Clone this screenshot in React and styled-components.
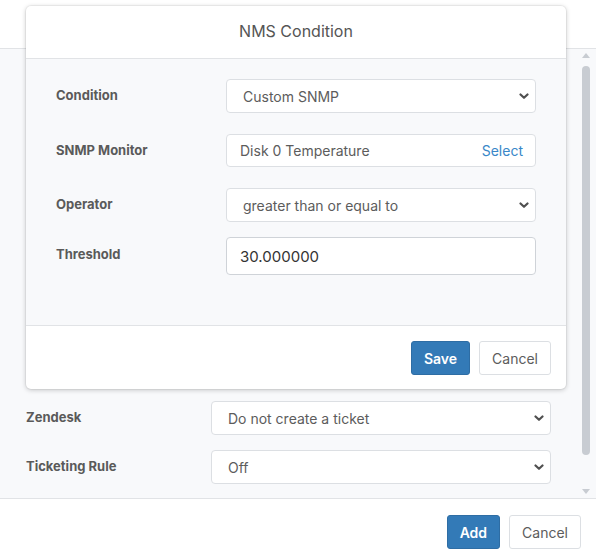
import React from 'react'
import styled, { createGlobalStyle } from 'styled-components'

const GlobalStyle = createGlobalStyle`
    * { box-sizing: border-box; }
    body {
        margin: 0;
        font-family: Inter, "Noto Sans", sans-serif;
        font-size: 14px;
        color: #5c5c5c;
        background: #fff;
    }
`

// small bold chevron used by the select boxes
const Chevron = () => (
    <svg width="10" height="7" viewBox="0 0 10 7">
        <path d="M1.5 1.5 L5 4.8 L8.5 1.5" fill="none" stroke="#4f4f4f" strokeWidth="2.2" strokeLinecap="round" strokeLinejoin="round" />
    </svg>
)

function SelectBox({ value }) {
    return (
        <Select role="listbox">
            <span>{value}</span>
            <Chevron />
        </Select>
    )
}

function App() {
    return (
        <>
            <GlobalStyle />
            <Page>
                <TopBar />
                <Body>
                    <Content>
                        <Row>
                            <Label>Zendesk</Label>
                            <SelectBox value="Do not create a ticket" />
                        </Row>
                        <Row>
                            <Label>Ticketing Rule</Label>
                            <SelectBox value="Off" />
                        </Row>
                    </Content>
                    <ScrollTrack>
                        <Arrow $up />
                        <Thumb />
                        <Arrow />
                    </ScrollTrack>
                </Body>
                <Footer>
                    <Button $primary>Add</Button>
                    <Button>Cancel</Button>
                </Footer>

                <Modal>
                    <ModalHeader>NMS Condition</ModalHeader>
                    <ModalBody>
                        <ModalRow>
                            <ModalLabel>Condition</ModalLabel>
                            <SelectBox value="Custom SNMP" />
                        </ModalRow>
                        <ModalRow>
                            <ModalLabel>SNMP Monitor</ModalLabel>
                            <Picker>
                                <span>Disk 0 Temperature</span>
                                <PickLink>Select</PickLink>
                            </Picker>
                        </ModalRow>
                        <ModalRow>
                            <ModalLabel>Operator</ModalLabel>
                            <SelectBox value="greater than or equal to" />
                        </ModalRow>
                        <ModalRow $gap={15}>
                            <ModalLabel $lift={4}>Threshold</ModalLabel>
                            <Input defaultValue="30.000000" />
                        </ModalRow>
                    </ModalBody>
                    <ModalFooter>
                        <Button $primary>Save</Button>
                        <Button>Cancel</Button>
                    </ModalFooter>
                </Modal>
            </Page>
        </>
    )
}

export default App

const Page = styled.div`
    position: relative;
    width: 596px;
    height: 557px;
    display: flex;
    flex-direction: column;
    overflow: hidden;
`
const TopBar = styled.div`
    height: 49px;
    flex-shrink: 0;
    border-bottom: 1px solid #e1e3e6;
    background: #fff;
`
const Body = styled.div`
    height: 450px;
    flex-shrink: 0;
    display: flex;
    background: #f8f9fb;
    border-bottom: 1px solid #e1e3e6;
`
const Content = styled.div`
    flex: 1;
    display: flex;
    flex-direction: column;
    justify-content: flex-end;
    gap: 15px;
    padding: 0 0 14px 26px;
`
const Row = styled.div`
    display: flex;
    align-items: center;
    width: 525px;
`
const Label = styled.div`
    width: 185px;
    flex-shrink: 0;
    font-size: 13px;
    font-weight: 700;
    color: #5a5a5a;
    margin-top: -${p => p.$lift || 2}px;
`
const Select = styled.div`
    flex: 1;
    height: 34px;
    display: flex;
    align-items: center;
    justify-content: space-between;
    padding: 0 6px 0 16px;
    background: #fff;
    border: 1px solid #dcdfe3;
    border-radius: 4px;
    color: #5c5c5c;
    font-size: 14px;
`
const ScrollTrack = styled.div`
    width: 15px;
    flex-shrink: 0;
    display: flex;
    flex-direction: column;
    align-items: center;
    padding: 4px 3px 3px 0;
    margin-right: 1px;
`
const Arrow = styled.div`
    width: 0;
    height: 0;
    border-left: 4px solid transparent;
    border-right: 4px solid transparent;
    ${p => p.$up
        ? 'border-bottom: 5px solid #c8ccd2; margin-bottom: 8px;'
        : 'border-top: 5px solid #c8ccd2; margin-top: 34px;'}
`
const Thumb = styled.div`
    width: 8px;
    height: 389px;
    border-radius: 4px;
    background: #c8ccd2;
`
const Footer = styled.div`
    flex: 1;
    display: flex;
    justify-content: flex-end;
    align-items: flex-start;
    gap: 9px;
    padding: 16px 15px 0 0;
    background: #fff;
`
const Button = styled.button`
    height: 34px;
    padding: 0 12px;
    font-family: inherit;
    font-size: 14px;
    font-weight: ${p => (p.$primary ? 600 : 400)};
    color: ${p => (p.$primary ? '#fff' : '#5c5c5c')};
    background: ${p => (p.$primary ? '#337ab7' : '#fff')};
    border: 1px solid ${p => (p.$primary ? '#2e6da4' : '#dcdfe3')};
    border-radius: 3px;
    cursor: pointer;
`
const Modal = styled.div`
    position: absolute;
    left: 26px;
    top: 6px;
    width: 540px;
    height: 383px;
    display: flex;
    flex-direction: column;
    background: #fff;
    border-radius: 5px;
    box-shadow: 0 1px 5px rgba(0, 0, 0, 0.22), 0 0 0 1px rgba(0, 0, 0, 0.04);
    overflow: hidden;
`
const ModalHeader = styled.div`
    height: 53px;
    flex-shrink: 0;
    display: flex;
    align-items: center;
    justify-content: center;
    padding-bottom: 2px;
    font-size: 16px;
    color: #555;
    border-bottom: 1px solid #e1e3e6;
`
const ModalBody = styled.div`
    height: 267px;
    flex-shrink: 0;
    display: flex;
    flex-direction: column;
    padding: 20px 30px 0 30px;
    background: #f8f9fb;
    border-bottom: 1px solid #e1e3e6;
`
const ModalRow = styled.div`
    display: flex;
    align-items: center;
    margin-top: ${p => (p.$gap ? p.$gap : 21)}px;
    &:first-child { margin-top: 0; }
`
const ModalLabel = styled(Label)`
    width: 170px;
`
const Picker = styled(Select)`
    height: 33px;
    padding: 0 12px 0 13px;
`
const PickLink = styled.span`
    color: #3a87c8;
    font-size: 14px;
`
const Input = styled.input`
    flex: 1;
    height: 38px;
    padding: 0 13px;
    font-family: inherit;
    font-size: 15px;
    color: #333;
    background: #fff;
    border: 1px solid #cfd3d8;
    border-radius: 4px;
    outline: none;
`
const ModalFooter = styled.div`
    flex: 1;
    display: flex;
    justify-content: flex-end;
    align-items: flex-start;
    gap: 9px;
    padding: 15px 15px 0 0;
`
